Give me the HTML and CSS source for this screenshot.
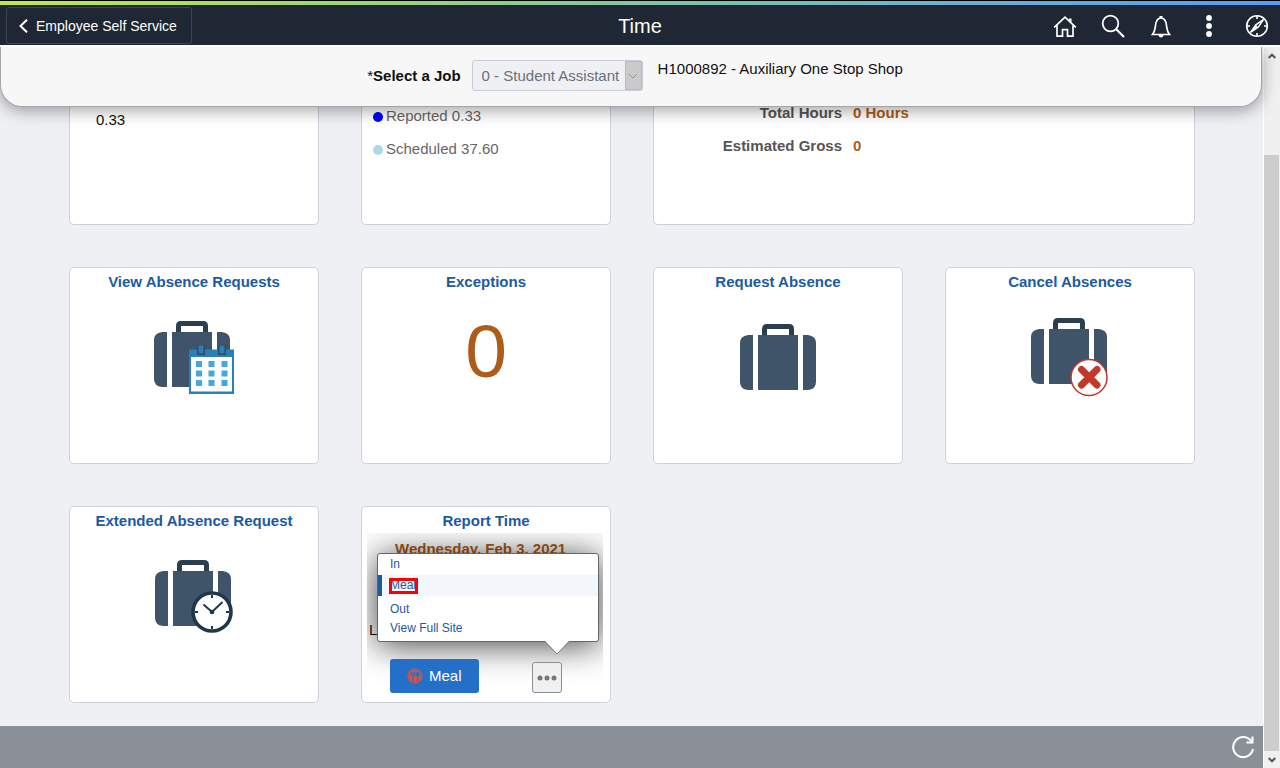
FILE: index.html
```html
<!DOCTYPE html>
<html lang="en">
<head>
<meta charset="utf-8">
<title>Time</title>
<link rel="stylesheet" href="styles.css">
</head>
<body>
<svg class="sprites" aria-hidden="true">
  <symbol id="suitcase" viewBox="0 0 76 66" overflow="visible">
    <path d="M24.500 12V5q0-2.500 2.500-2.500h22q2.500 0 2.500 2.500v7" fill="none" stroke="#2b3e50" stroke-width="5"/>
    <path d="M8 11h5v55H8q-8-1-8-8V19q0-7 8-8zM18 11h40v55H18zM63 11h5q8 1 8 8v39q0 7-8 8h-5z" fill="#3f5468"/>
  </symbol>
</svg>
<div class="app">
  <header class="header">
    <button class="back" type="button">
      <svg width="9" height="14" viewBox="0 0 9 14"><path d="M8 .7L1.500 7L8 13.300" fill="none" stroke="#fff" stroke-width="2"/></svg>
      Employee Self Service
    </button>
    <h1 class="title">Time</h1>
    <nav class="tools" aria-label="Tools">
      <button type="button" aria-label="Home"><svg viewBox="0 0 24 24"><path d="M1.200 13.300L12 3.200L22.800 13.300M4 11.500V22.200h5.500v-6.500h5v6.500H20V11.500" fill="none" stroke="#fff" stroke-width="1.700"/><path d="M16 4.500h2.500v5L16 7z" fill="#fff"/></svg></button>
      <button type="button" aria-label="Search"><svg viewBox="0 0 24 24"><circle cx="9.500" cy="9.500" r="7.800" fill="none" stroke="#fff" stroke-width="1.800"/><path d="M15 15l8 8" stroke="#fff" stroke-width="2.200"/></svg></button>
      <button type="button" aria-label="Notifications"><svg viewBox="0 0 24 24"><path d="M3.500 20.500h17c-2.500-3-2.500-5-3-9C17 7 15 4 12 4s-5 3-5.500 7.500c-.5 4-.5 6-3 9z" fill="none" stroke="#fff" stroke-width="1.700"/><path d="M10.500 4V2h3v2zM9.500 21h5q-.5 2.500-2.500 2.500t-2.500-2.500z" fill="#fff"/></svg></button>
      <button type="button" aria-label="Actions"><svg viewBox="0 0 24 24"><g fill="#fff"><circle cx="12" cy="4" r="2.900"/><circle cx="12" cy="12" r="2.900"/><circle cx="12" cy="20" r="2.900"/></g></svg></button>
      <button type="button" aria-label="Navigator"><svg viewBox="0 0 24 24"><circle cx="12" cy="12" r="10.300" fill="none" stroke="#fff" stroke-width="1.600"/><path d="M12 2v3M12 19v3M2 12h3M19 12h3" stroke="#fff" stroke-width="1.600"/><path d="M18.500 5.500L13.200 13.200L5.500 18.500L10.800 10.800z" fill="none" stroke="#fff" stroke-width="1.400"/><path d="M10.800 10.800l2.400 2.400l-7.700 5.300z" fill="#fff"/></svg></button>
    </nav>
  </header>
  <div class="view">
    <div class="page">
      <section class="jobbar">
        <label class="job-label" for="job"><span class="star">*</span>Select a Job</label>
        <div class="job-select">
          <select id="job" disabled><option>0 - Student Assistant</option></select>
          <span class="job-arrow"><svg width="10" height="6" viewBox="0 0 10 6"><path d="M1 1l4 4l4-4" fill="none" stroke="#999" stroke-width="1"/></svg></span>
        </div>
        <span class="job-name">H1000892 - Auxiliary One Stop Shop</span>
      </section>
      <main class="grid">
        <article class="card card-total">0.33</article>
        <article class="card card-legend">
          <ul class="legend">
            <li><i class="dot dot-reported"></i>Reported 0.33</li>
            <li><i class="dot dot-scheduled"></i>Scheduled 37.60</li>
          </ul>
        </article>
        <article class="card card-pay">
          <dl class="pay"><dt>Total Hours</dt><dd>0 Hours</dd><dt>Estimated Gross</dt><dd>0</dd></dl>
        </article>

        <article class="card">
          <h2>View Absence Requests</h2>
          <div class="figure">
            <svg width="80" height="73" viewBox="0 0 80 73">
              <use href="#suitcase" width="76" height="66"/>
              <path d="M35 28.500h45V73H35z" fill="#2980b9"/><path d="M37 36h41V70.500H37z" fill="#fff"/>
              <path d="M43 24h8v10h-8zM64 24h8v10h-8z" fill="#34495e"/><path d="M44.500 24.500h5v8h-5zM65.500 24.500h5v8h-5z" fill="#2980b9"/>
              <path d="M42 40h6v6h-6zM54.500 40h6v6h-6zM67.500 40h6v6h-6zM42 49.500h6v6h-6zM54.500 49.500h6v6h-6zM67.500 49.500h6v6h-6zM42 59h6v6h-6zM54.500 59h6v6h-6zM67.500 59h6v6h-6z" fill="#45a7df"/>
            </svg>
          </div>
        </article>
        <article class="card">
          <h2>Exceptions</h2>
          <div class="count">0</div>
        </article>
        <article class="card">
          <h2>Request Absence</h2>
          <div class="figure"><svg width="76" height="66" viewBox="0 0 76 66"><use href="#suitcase" width="76" height="66"/></svg></div>
        </article>
        <article class="card">
          <h2>Cancel Absences</h2>
          <div class="figure">
            <svg width="78" height="79" viewBox="0 0 78 79">
              <use href="#suitcase" width="76" height="66"/>
              <circle cx="58" cy="59.500" r="18" fill="#fff" stroke="#c0392b" stroke-width="1.500"/>
              <path d="M50.500 51.500l15.500 15.500M66 51.500L50.500 67" stroke="#c0392b" stroke-width="7" stroke-linecap="round"/>
            </svg>
          </div>
        </article>

        <article class="card">
          <h2>Extended Absence Request</h2>
          <div class="figure">
            <svg width="78" height="73" viewBox="0 0 78 73">
              <use href="#suitcase" width="76" height="66"/>
              <circle cx="57" cy="52" r="19" fill="#fff" stroke="#22364a" stroke-width="3.600"/>
              <path d="M57 35v3M57 66v3M40 52h3M71 52h3" stroke="#22364a" stroke-width="2"/>
              <path d="M48.500 44.500l8.500 7.500l10.500-10" fill="none" stroke="#22364a" stroke-width="2"/><circle cx="57" cy="52" r="2.300" fill="#22364a"/>
            </svg>
          </div>
        </article>
        <article class="card">
          <h2>Report Time</h2>
          <div class="report">
            <p class="date">Wednesday, Feb 3, 2021</p>
            <p class="last">L</p>
            <div class="actions">
              <button class="meal" type="button">
                <svg width="16" height="16" viewBox="0 0 16 16"><circle cx="8" cy="8" r="7.500" fill="#e2503f"/><g fill="none" stroke="#2470c8" stroke-width="1"><circle cx="8" cy="8" r="6.200" stroke-width=".6"/><path d="M4.500 4v3q0 1.500 1.500 1.500T7.500 7V4M6 4v9"/></g><path d="M10.500 3.500q2 1 2 3t-1.500 2.500V13h-1V9q-1.500-.5-1.500-2.500t2-3z" fill="#2470c8"/></svg>
                Meal
              </button>
              <button class="more" type="button" aria-label="More actions"><svg width="20" height="6" viewBox="0 0 20 6"><g fill="#777"><circle cx="3" cy="3" r="2.500"/><circle cx="10" cy="3" r="2.500"/><circle cx="17" cy="3" r="2.500"/></g></svg></button>
            </div>
            <div class="menu">
              <button type="button">In</button>
              <button type="button" class="active"><span class="marked">Meal</span></button>
              <button type="button" class="out">Out</button>
              <button type="button" class="short">View Full Site</button>
              <svg class="pointer" width="24" height="14" viewBox="0 0 24 14"><path d="M0 0h24L12 13z" fill="#fff"/><path d="M0 .5L12 13L24 .5" fill="none" stroke="#777"/></svg>
            </div>
          </div>
        </article>
      </main>
      <footer class="footer">
        <button type="button" aria-label="Refresh"><svg width="24" height="24" viewBox="0 0 24 24"><path d="M20.500 6.500A10 10 0 1 0 22 14" fill="none" stroke="#fff" stroke-width="2"/><path d="M21.500 1.500v6h-6" fill="none" stroke="#fff" stroke-width="2"/></svg></button>
      </footer>
    </div>
    <div class="scroll" aria-hidden="true">
      <span class="step"><svg width="8" height="6" viewBox="0 0 8 6"><path d="M.7 5L4 1.700L7.300 5" fill="none" stroke="#555" stroke-width="2"/></svg></span>
      <span class="thumb"></span>
      <span class="step"><svg width="8" height="6" viewBox="0 0 8 6"><path d="M.7 1L4 4.300L7.300 1" fill="none" stroke="#555" stroke-width="2"/></svg></span>
    </div>
  </div>
</div>
</body>
</html>
```
FILE: styles.css
```css
*, *::before, *::after { box-sizing: border-box; }
body { margin: 0; background: #eff0f4; color: #111; font: 15px/18px "Liberation Sans", Arial, sans-serif; }
button { margin: 0; padding: 0; border: 0; background: none; font: inherit; color: inherit; }
svg { display: block; }
h1, h2, p, ul, dl, dd { margin: 0; padding: 0; }
.sprites { display: none; }
.app { display: flex; flex-direction: column; height: 100vh; overflow: hidden; }

.header {
  position: relative; z-index: 3; flex: none;
  display: grid; grid-template-columns: 1fr auto 1fr; align-items: center;
  height: 47px; padding: 7px 6px 1px;
  color: #fff;
  background:
    linear-gradient(#000, #000) 0 0 / 100% 1px no-repeat,
    linear-gradient(90deg, #bde84d, #82c6a4 50%, #559cf8) 0 1px / 100% 4px no-repeat,
    #1e2733;
  border-bottom: 2px solid #fff;
}
.back { display: flex; align-items: center; gap: 8px; justify-self: start; height: 37px; padding: 0 14px 0 12px; border: 1px solid #3c4550; border-radius: 3px; font-size: 14px; }
.title { font-size: 20px; line-height: 24px; font-weight: normal; }
.tools { display: flex; justify-content: flex-end; gap: 24px; margin-right: 5px; }
.tools svg { width: 24px; height: 24px; }

.view { display: flex; flex: 1; min-height: 0; }
.page { display: flex; flex-direction: column; flex: 1; min-width: 0; }
.jobbar {
  position: relative; z-index: 2; flex: none;
  display: flex; align-items: flex-start; justify-content: center;
  height: 60px; margin-right: 2px; padding: 13px 0 0 8px;
  background: #f7f7f7; border: 1px solid #a3a5a8; border-top: 0; border-radius: 0 0 22px 22px;
  box-shadow: 0 4px 16px rgba(0, 0, 0, .35);
}
.job-label { padding-top: 7px; margin-right: 11px; font-weight: bold; }
.star { font-weight: normal; }
.job-select { display: flex; height: 31px; margin-right: 15px; border: 1px solid #c9cdd8; border-radius: 3px; background: #eff0f4; }
.job-select select { appearance: none; width: 152px; padding: 0 0 0 9px; border: 0; background: transparent; color: #6b6f78; opacity: 1; font: inherit; }
.job-arrow { display: flex; align-items: center; justify-content: center; width: 17px; background: #cacaca; border: 1px solid #bbb; }

.grid {
  flex: 1; min-height: 0; margin-top: -79px; padding: 0 69px;
  display: grid; grid-template-columns: repeat(4, 1fr); grid-auto-rows: 197px; gap: 42px;
}
.card { background: #fff; border: 1px solid #ccd0d9; border-radius: 5px; }
.card h2 { padding: 5px 0 3px; font-size: 15px; line-height: 18px; text-align: center; color: #1b5aa3; }
.card-total { padding: 82px 26px 0; }
.card-legend { padding: 78px 11px 0; color: #666; }
.legend { display: grid; gap: 15px; list-style: none; }
.legend li { display: flex; align-items: center; gap: 3px; }
.dot { width: 10px; height: 10px; border-radius: 50%; margin-top: 2px; }
.dot-reported { background: #00f; }
.dot-scheduled { background: #add8e6; }
.card-pay { grid-column: span 2; padding-top: 75px; font-weight: bold; }
.pay { display: grid; grid-template-columns: 188px 1fr; gap: 15px 11px; }
.pay dt { text-align: right; color: #555; }
.pay dd { color: #ad5c1a; }
.figure { display: flex; align-items: center; justify-content: center; height: 126px; }
.count { height: 126px; font-size: 75px; line-height: 114px; text-align: center; color: #ad5c1a; }

.report { position: relative; overflow: hidden; height: 168px; margin: 0 7px 0 5px; padding-top: 7px; }
.date { padding-left: 28px; font-weight: bold; color: #ad5c1a; white-space: nowrap; }
.last { margin-top: 63px; padding-left: 2px; }
.actions { position: relative; z-index: 1; display: flex; align-items: flex-end; gap: 53px; margin-top: 20px; padding-left: 23px; }
.meal { display: flex; align-items: center; gap: 6px; height: 34px; padding: 0 17px; border-radius: 3px; background: #2470c8; color: #fff; }
.more { display: flex; align-items: center; justify-content: center; width: 30px; height: 31px; background: #f0f0f0; border: 1px solid #8a8f96; border-radius: 3px; }
.menu {
  position: absolute; left: 10px; top: 20px; width: 222px;
  display: flex; flex-direction: column; padding-bottom: 3px;
  background: #fff; border: 1px solid #666; border-radius: 3px;
  box-shadow: 0 3px 34px rgba(0, 0, 0, .75);
  font-size: 12px; line-height: 21px; color: #1b5aa3;
}
.menu button { padding-left: 12px; text-align: left; }
.menu .active { padding-left: 8px; border-left: 4px solid #1b5aa3; background: #f3f7fc; }
.menu .out { margin-top: 3px; line-height: 20px; }
.menu .short { line-height: 19px; }
.marked { position: relative; }
.marked::after { content: ""; position: absolute; left: -1px; top: 0; width: 29px; height: 16px; border: 3px solid #f00; }
.pointer { position: absolute; left: 167px; top: 100%; }

.footer { flex: none; display: flex; align-items: center; justify-content: flex-end; height: 42px; padding-right: 9px; background: #8b9098; }
.scroll { display: flex; flex-direction: column; flex: none; width: 16px; background: #f0f0f0; box-shadow: -1px 0 #fff; }
.step { display: flex; align-items: center; justify-content: center; height: 17px; }
.thumb { flex: 1; margin: 91px 1px 0 0; background: #cdcdcd; }
```
